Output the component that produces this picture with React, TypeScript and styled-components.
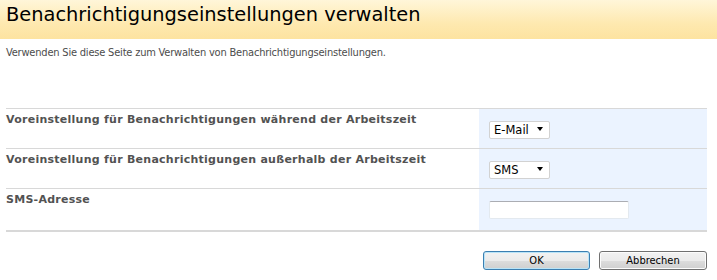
import React from 'react'
import styled, { createGlobalStyle } from 'styled-components'

const GlobalStyle = createGlobalStyle`
  body {
    margin: 0;
    background: #fff;
    font-family: 'DejaVu Sans', Verdana, sans-serif;
  }
`

const rows = [
  { label: 'Voreinstellung für Benachrichtigungen während der Arbeitszeit', kind: 'select', value: 'E-Mail', options: ['E-Mail', 'SMS'] },
  { label: 'Voreinstellung für Benachrichtigungen außerhalb der Arbeitszeit', kind: 'select', value: 'SMS', options: ['E-Mail', 'SMS'] },
  { label: 'SMS-Adresse', kind: 'input', value: '' },
]

const App = () => {
  return (
    <Page>
      <GlobalStyle />
      <Header>Benachrichtigungseinstellungen verwalten</Header>
      <Description>
        Verwenden Sie diese Seite zum Verwalten von Benachrichtigungseinstellungen.
      </Description>

      <Form>
        {rows.map((row, i) => (
          <Row key={row.label} last={i === rows.length - 1}>
            <Label>{row.label}</Label>
            <Control>
              {row.kind === 'select' ? (
                <SelectBox>
                  <select defaultValue={row.value}>
                    {row.options?.map((o) => (
                      <option key={o}>{o}</option>
                    ))}
                  </select>
                  <Arrow />
                </SelectBox>
              ) : (
                <TextInput type="text" defaultValue={row.value} />
              )}
            </Control>
          </Row>
        ))}
      </Form>

      <Buttons>
        <Button primary>OK</Button>
        <Button>Abbrechen</Button>
      </Buttons>
    </Page>
  )
}

export default App

const Page = styled.div`
  width: 717px;
  height: 280px;
  overflow: hidden;
`

const Header = styled.div`
  height: 39px;
  box-sizing: border-box;
  padding: 1px 0 0 6px;
  background: linear-gradient(to bottom, #fff6d9 0%, #fee9b0 60%, #fde3a0 100%);
  font-size: 19.4px;
  line-height: 28px;
  color: #000;
  white-space: nowrap;
`

const Description = styled.div`
  margin: 7px 0 0 6px;
  font-family: 'DejaVu Sans Condensed', 'DejaVu Sans', sans-serif;
  font-size: 11px;
  line-height: 14px;
  color: #4c4c4c;
  letter-spacing: -0.2px;
`

const Form = styled.div`
  margin: 48px 10px 0 6px;
  border-bottom: 2px solid #d8d8d8;
`

const Row = styled.div<{ last?: boolean }>`
  display: grid;
  grid-template-columns: 473px 228px;
  border-top: 1px solid #d8d8d8;
  height: ${(p) => (p.last ? '41px' : '39px')};
`

const Label = styled.div`
  padding-top: 4px;
  font-size: 11px;
  line-height: 14px;
  font-weight: bold;
  letter-spacing: 0.26px;
  color: #525252;
  white-space: nowrap;
`

const Control = styled.div`
  background: #ebf3ff;
  padding: 10px 0 0 10px;
`

const SelectBox = styled.span`
  position: relative;
  display: inline-block;
  width: 61px;
  height: 18px;

  select {
    appearance: none;
    -webkit-appearance: none;
    width: 100%;
    height: 100%;
    box-sizing: border-box;
    border: 1px solid #d2d2d2;
    border-radius: 2px;
    background: #fff;
    padding: 0 0 0 4px;
    margin: 0;
    font-family: 'DejaVu Sans', sans-serif;
    font-size: 11.5px;
    color: #000;
    outline: none;
  }
`

const Arrow = styled.span`
  position: absolute;
  right: 7px;
  top: 8px;
  width: 0;
  height: 0;
  border-left: 3.5px solid transparent;
  border-right: 3.5px solid transparent;
  border-top: 4px solid #000;
  pointer-events: none;
`

const TextInput = styled.input`
  width: 140px;
  height: 18px;
  box-sizing: border-box;
  margin: 0;
  padding: 0 3px;
  border: 1px solid #e3e9ef;
  border-top-color: #abadb3;
  border-radius: 2px;
  background: #fff;
  font-size: 11px;
  outline: none;
`

const Buttons = styled.div`
  display: flex;
  justify-content: flex-end;
  gap: 9px;
  margin-top: 19px;
  padding-right: 10px;
`

const Button = styled.button<{ primary?: boolean }>`
  width: ${(p) => (p.primary ? '107px' : '108px')};
  height: 19px;
  padding: 0;
  border: 1px solid ${(p) => (p.primary ? '#3c7fb1' : '#707070')};
  border-radius: 3px;
  background: linear-gradient(to bottom, #f2f2f2 0%, #ebebeb 50%, #dddddd 51%, #cfcfcf 100%);
  box-shadow: ${(p) => (p.primary ? 'inset 0 0 0 1px #b9e4f8' : 'inset 0 0 0 1px #fcfcfc')};
  font-family: 'DejaVu Sans Condensed', 'DejaVu Sans', sans-serif;
  font-size: 11px;
  color: #000;
  line-height: 17px;
`
